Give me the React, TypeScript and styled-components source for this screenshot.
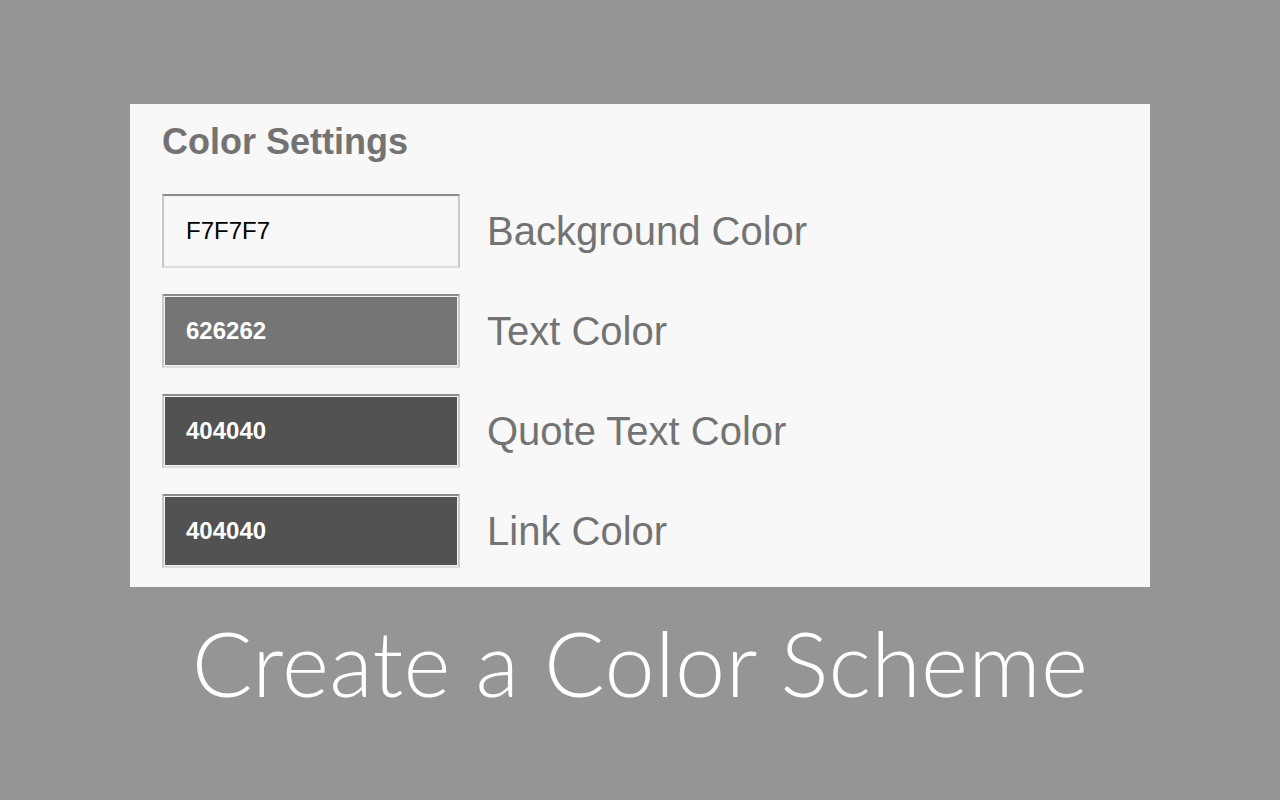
import React, { FC } from 'react';
import styled, { createGlobalStyle } from 'styled-components';

const GlobalStyle = createGlobalStyle`
  html, body {
    margin: 0;
    padding: 0;
    background: #959595;
  }
  body {
    font-family: 'Liberation Sans', Arial, sans-serif;
  }
`;

const Page = styled.main`
  width: 1280px;
  height: 800px;
  display: flex;
  flex-direction: column;
  align-items: center;
  padding-top: 104px;
  box-sizing: border-box;
`;

const Panel = styled.section`
  width: 1020px;
  box-sizing: border-box;
  background: #f8f8f8;
  padding: 18px 32px 19px;
  display: flex;
  flex-direction: column;
`;

const Title = styled.h2`
  margin: 0 0 32px;
  font-size: 36px;
  line-height: 40px;
  font-weight: 700;
  color: #737373;
`;

const Rows = styled.div`
  display: flex;
  flex-direction: column;
  gap: 26px;
`;

const Row = styled.div`
  display: grid;
  grid-template-columns: 298px auto;
  column-gap: 27px;
  align-items: center;
`;

const Swatch = styled.div<{ $fill: string; $ink: string; $bold?: boolean }>`
  height: 74px;
  box-sizing: border-box;
  border-style: solid;
  border-width: 2px;
  border-color: #8b8b8b #c9c9c9 #dedede #c9c9c9;
  background: ${(p) => p.$fill};
  box-shadow: inset 0 0 0 1px #f2f2f2;
  padding: 0 22px;
  display: flex;
  align-items: center;
  font-size: 24px;
  font-weight: ${(p) => (p.$bold ? 700 : 400)};
  color: ${(p) => p.$ink};
`;

const Label = styled.span`
  font-size: 40px;
  color: #737373;
  line-height: 1;
`;

const Caption = styled.h1`
  margin: 21px 0 0;
  font-family: Lato, 'Open Sans', sans-serif;
  font-weight: 300;
  font-size: 90px;
  line-height: 1.2;
  color: #ffffff;
  letter-spacing: 0.3px;
`;

const settings = [
  { value: 'F7F7F7', label: 'Background Color', fill: '#f8f8f8', ink: '#000000', bold: false },
  { value: '626262', label: 'Text Color', fill: '#757575', ink: '#ffffff', bold: true },
  { value: '404040', label: 'Quote Text Color', fill: '#525252', ink: '#ffffff', bold: true },
  { value: '404040', label: 'Link Color', fill: '#525252', ink: '#ffffff', bold: true },
];

const App: FC = (): JSX.Element => (
  <>
    <GlobalStyle />
    <Page>
      <Panel>
        <Title>Color Settings</Title>
        <Rows>
          {settings.map((s) => (
            <Row key={s.label}>
              <Swatch $fill={s.fill} $ink={s.ink} $bold={s.bold}>
                {s.value}
              </Swatch>
              <Label>{s.label}</Label>
            </Row>
          ))}
        </Rows>
      </Panel>
      <Caption>Create a Color Scheme</Caption>
    </Page>
  </>
);

export default App;
